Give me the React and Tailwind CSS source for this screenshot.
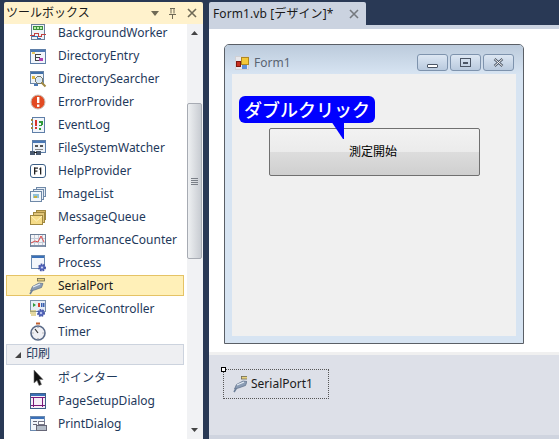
import React from 'react';

const Ic = ({ children }) => (
  <svg width="20" height="20" viewBox="0 0 20 20" className="block" shapeRendering="crispEdges">{children}</svg>
);

const SerialIcon = () => (
  <svg width="20" height="20" viewBox="0 0 20 20" className="block">
    <rect x="9.5" y="2.5" width="7" height="2.5" fill="#e9d27c" stroke="#6f6a50" strokeWidth="0.8" />
    <path d="M2.5 15 L4.5 10.5 L11 7 L15 7.5 L13.5 11.5 L6.5 14 Z" fill="#8b9db5" stroke="#5d6f88" strokeWidth="0.7" />
    <path d="M5 11 L12 8" stroke="#e6edf5" strokeWidth="1.2" />
    <path d="M2 18 L4.5 14" stroke="#6d7f98" strokeWidth="1.6" />
  </svg>
);

const icons = {
  worker: (
    <Ic>
      <rect x="3.5" y="1.5" width="13" height="15" fill="#eef3f8" stroke="#6b7f99" />
      <rect x="5" y="3" width="10" height="4" fill="#3f8f3f" />
      <rect x="6" y="4" width="2" height="2" fill="#b8f0a8" /><rect x="9" y="4" width="2" height="2" fill="#b8f0a8" /><rect x="12" y="4" width="2" height="2" fill="#b8f0a8" />
      <path d="M2 12h4v-2h4v3h3v-2h5" stroke="#c04040" fill="none" />
      <path d="M4 13h5v2h4" stroke="#3a70b0" fill="none" />
    </Ic>
  ),
  entry: (
    <Ic>
      <rect x="2.5" y="3.5" width="15" height="14" fill="#f1f5fb" stroke="#5f7fa8" />
      <rect x="3" y="4" width="14" height="2" fill="#4a78b5" />
      <rect x="7" y="8" width="6" height="1" fill="#444" /><rect x="7" y="8" width="1" height="7" fill="#444" /><rect x="7" y="11" width="5" height="1" fill="#444" /><rect x="7" y="14" width="6" height="1" fill="#444" />
      <rect x="11" y="12" width="4" height="3" fill="#b040b0" />
      <rect x="4" y="6" width="3" height="2" fill="#e8c860" />
    </Ic>
  ),
  searcher: (
    <Ic>
      <rect x="2.5" y="2.5" width="13" height="12" fill="#eef3f8" stroke="#6a86a8" />
      <rect x="3" y="3" width="12" height="2" fill="#3f6fa8" />
      <rect x="4" y="7" width="3" height="3" fill="#e0b840" />
      <circle cx="11" cy="11" r="3.5" fill="#d8e8f4" stroke="#7a7a6a" />
      <path d="M13.5 13.5 L17.5 17.5" stroke="#a08840" strokeWidth="2" shapeRendering="auto" />
      <rect x="6" y="15" width="4" height="2" fill="#4a78b5" />
    </Ic>
  ),
  error: (
    <svg width="20" height="20" viewBox="0 0 20 20" className="block">
      <circle cx="10" cy="10" r="7" fill="#e24a22" stroke="#c8c0b8" />
      <rect x="9" y="5" width="2.4" height="6" fill="#fff" />
      <rect x="9" y="12.5" width="2.4" height="2.4" fill="#fff" />
    </svg>
  ),
  event: (
    <Ic>
      <rect x="4.5" y="2.5" width="12" height="15" fill="#f1f5fb" stroke="#5f7fa8" />
      <rect x="3" y="4" width="2" height="2" fill="#a08840" /><rect x="3" y="8" width="2" height="2" fill="#a08840" /><rect x="3" y="12" width="2" height="2" fill="#a08840" />
      <rect x="7" y="5" width="2" height="6" fill="#d8342a" /><rect x="7" y="12" width="2" height="2" fill="#d8342a" />
      <rect x="11" y="6" width="4" height="2" fill="#2f9a3a" /><rect x="13" y="8" width="2" height="2" fill="#2f9a3a" /><rect x="11" y="10" width="3" height="1" fill="#2f9a3a" /><rect x="11" y="13" width="2" height="2" fill="#2f9a3a" />
    </Ic>
  ),
  fsw: (
    <Ic>
      <rect x="4.5" y="2.5" width="13" height="12" fill="#eef3f8" stroke="#5f7fa8" />
      <rect x="5" y="3" width="12" height="2" fill="#4a78b5" />
      <rect x="7" y="7" width="3" height="2" fill="#555" /><rect x="12" y="7" width="3" height="2" fill="#555" />
      <rect x="7" y="11" width="8" height="1" fill="#888" />
      <rect x="2" y="13" width="5" height="4" fill="#4a5a70" /><rect x="8" y="13" width="5" height="4" fill="#4a5a70" /><rect x="6" y="14" width="3" height="1" fill="#222" />
    </Ic>
  ),
  f1: (
    <svg width="20" height="20" viewBox="0 0 20 20" className="block">
      <rect x="2.5" y="3.5" width="15" height="13" rx="2.5" fill="#fff" stroke="#3c5f86" strokeWidth="1" />
      <rect x="6" y="6.5" width="1.3" height="7" fill="#222" /><rect x="6" y="6.5" width="4" height="1.2" fill="#222" /><rect x="6" y="9.5" width="3.4" height="1.2" fill="#222" />
      <rect x="12" y="6.5" width="1.3" height="7" fill="#222" /><rect x="11" y="7.5" width="1.2" height="1" fill="#222" />
    </svg>
  ),
  images: (
    <Ic>
      <rect x="8.5" y="3.5" width="9" height="9" fill="#e4ecf5" stroke="#6f89a8" />
      <rect x="5.5" y="5.5" width="10" height="10" fill="#e9f0f7" stroke="#6f89a8" />
      <rect x="2.5" y="7.5" width="11" height="10" fill="#f3f7fb" stroke="#6f89a8" />
      <rect x="5" y="10" width="6" height="4" fill="#8fc0d8" /><rect x="6" y="12" width="3" height="2" fill="#c8b040" />
    </Ic>
  ),
  queue: (
    <Ic>
      <rect x="8.5" y="3.5" width="9" height="9" fill="#d8b868" stroke="#a08840" />
      <rect x="5.5" y="5.5" width="11" height="10" fill="#e0c478" stroke="#a08840" />
      <rect x="2.5" y="8.5" width="12" height="9" fill="#f6dc88" stroke="#a08840" />
      <path d="M3 9 L8.5 14 L14 9" stroke="#fff3c0" fill="none" shapeRendering="auto" />
    </Ic>
  ),
  perf: (
    <Ic>
      <rect x="2.5" y="4.5" width="15" height="12" fill="#f4f4f8" stroke="#6d7f98" />
      <path d="M3 8.5h14M3 12.5h14M6.5 5v11M10.5 5v11M14.5 5v11" stroke="#c4ccd8" fill="none" />
      <path d="M3 13 L7 11 L10 12 L13 6 L16 12" stroke="#d84848" fill="none" shapeRendering="auto" />
      <rect x="3" y="15" width="14" height="2" fill="#8090a8" />
    </Ic>
  ),
  process: (
    <svg width="20" height="20" viewBox="0 0 20 20" className="block">
      <rect x="3.5" y="2.5" width="13" height="13" fill="#f3f6fb" stroke="#6b8ab0" />
      <rect x="4" y="3" width="12" height="2" fill="#3a70b8" />
      <circle cx="14" cy="14.5" r="3" fill="#5a6cc0" stroke="#4657a8" strokeWidth="2" strokeDasharray="1.5 1" />
      <circle cx="14" cy="14.5" r="1" fill="#d8e0f8" />
    </svg>
  ),
  serial: <SerialIcon />,
  service: (
    <svg width="20" height="20" viewBox="0 0 20 20" className="block">
      <rect x="2.5" y="1.5" width="15" height="11" fill="#e6edf5" stroke="#7a90aa" />
      <path d="M5 4 L8 6 L5 8 Z" fill="#2f9a3a" />
      <rect x="10" y="4" width="2" height="4" fill="#d84030" /><rect x="13" y="4" width="1.5" height="4" fill="#3a60b0" /><rect x="15" y="4" width="1.5" height="4" fill="#3a60b0" />
      <path d="M2 12h6M2 14h6M3 16h5" stroke="#c8b040" />
      <circle cx="13" cy="14" r="3" fill="#5a6cc0" stroke="#4657a8" strokeWidth="2" strokeDasharray="1.5 1" />
      <circle cx="13" cy="14" r="1" fill="#d8e0f8" />
    </svg>
  ),
  timer: (
    <svg width="20" height="20" viewBox="0 0 20 20" className="block">
      <rect x="8" y="0.5" width="4" height="2" fill="#c06030" />
      <circle cx="10" cy="11" r="7" fill="#f0f0f4" stroke="#5a6a88" strokeWidth="1.6" />
      <path d="M10 11 L7 7" stroke="#333" strokeWidth="1.2" />
      <path d="M10 5v1M15.5 11h-1M10 17v-1M4.5 11h1" stroke="#888" />
    </svg>
  ),
  pointer: (
    <svg width="20" height="20" viewBox="0 0 20 20" className="block">
      <path d="M6 2 L6 15 L9 12.5 L11 17.5 L13.5 16.5 L11.5 11.5 L15 11.5 Z" fill="#111" stroke="#777" strokeWidth="0.6" />
    </svg>
  ),
  page: (
    <Ic>
      <rect x="2.5" y="2.5" width="15" height="15" fill="#f8eef8" stroke="#3c5f86" />
      <rect x="3" y="3" width="14" height="2" fill="#3a70b8" />
      <rect x="3" y="6" width="14" height="1" fill="#7a1a7a" /><rect x="3" y="14" width="14" height="1" fill="#7a1a7a" />
      <rect x="5" y="6" width="1" height="10" fill="#7a1a7a" /><rect x="14" y="6" width="1" height="10" fill="#7a1a7a" />
    </Ic>
  ),
  print: (
    <Ic>
      <rect x="2.5" y="2.5" width="14" height="14" fill="#f1f5fb" stroke="#6b8ab0" />
      <rect x="3" y="3" width="13" height="2" fill="#3a70b8" />
      <rect x="5" y="7" width="4" height="1" fill="#667" /><rect x="5" y="10" width="4" height="1" fill="#667" />
      <rect x="10" y="7" width="6" height="3" fill="#fff" stroke="#778" />
      <rect x="8" y="11" width="10" height="5" fill="#b4bcc8" stroke="#667" />
    </Ic>
  ),
};

const rowsTop = [
  ['BackgroundWorker', 'worker'],
  ['DirectoryEntry', 'entry'],
  ['DirectorySearcher', 'searcher'],
  ['ErrorProvider', 'error'],
  ['EventLog', 'event'],
  ['FileSystemWatcher', 'fsw'],
  ['HelpProvider', 'f1'],
  ['ImageList', 'images'],
  ['MessageQueue', 'queue'],
  ['PerformanceCounter', 'perf'],
  ['Process', 'process'],
];

const Row = ({ label, icon }) => (
  <div className="flex items-center h-[23px] shrink-0 pl-[24px] text-[#1e395b]">
    <span className="w-[20px] shrink-0">{icons[icon]}</span>
    <span className="ml-[10px] whitespace-nowrap">{label}</span>
  </div>
);

const CaptionBtn = ({ children }) => (
  <div className="w-[31px] h-[17px] flex items-center justify-center rounded-[3px] border border-[#7e93ad] bg-gradient-to-b from-[#dde7f3] to-[#b9cade]">
    {children}
  </div>
);

export default function App() {
  return (
    <div
      className="w-[559px] h-[439px] overflow-hidden bg-[#293955] flex text-[12px] leading-none"
      style={{ fontFamily: '"Noto Sans", "Noto Sans CJK JP", sans-serif' }}
    >
      {/* toolbox */}
      <div className="w-[199px] ml-[4px] mt-[2px] flex flex-col shrink-0">
        <div className="relative z-10 h-[22px] shrink-0 bg-[#fff2cc] rounded-t-[2px] flex items-center pl-[2px] pr-[6px] text-[12px] text-[#1a1a1a]">
          <span className="flex-1 whitespace-nowrap">ツールボックス</span>
          <svg width="8" height="5" viewBox="0 0 8 5" className="mr-[10px]"><path d="M0 0h8L4 5z" fill="#6f6a56" /></svg>
          <svg width="7" height="11" viewBox="0 0 7 11" className="mr-[11px]"><path d="M1 .5h5M2 .5v5M5 .5v5M0 6.5h7M3.5 7v4" stroke="#6f6a56" fill="none" /></svg>
          <svg width="10" height="10" viewBox="0 0 10 10"><path d="M1 1l8 8M9 1l-8 8" stroke="#6f6a56" strokeWidth="1.6" /></svg>
        </div>
        <div className="flex-1 flex min-h-0">
          <div className="flex-1 bg-white flex flex-col min-w-0 overflow-visible -mt-[3px]">
            {rowsTop.map(([l, i]) => <Row key={l} label={l} icon={i} />)}
            <div className="ml-[2px] mr-[3px] my-px h-[21px] shrink-0 flex items-center pl-[21px] bg-[#fff0b8] border border-[#e5c365] text-[#1a1a1a]">
              <span className="w-[20px] shrink-0">{icons.serial}</span>
              <span className="ml-[10px]">SerialPort</span>
            </div>
            <Row label="ServiceController" icon="service" />
            <Row label="Timer" icon="timer" />
            <div className="ml-[2px] mr-[3px] my-px h-[21px] shrink-0 flex items-center pl-[8px] bg-[#eeeff2] border border-[#ccd3de] text-[#1e395b]">
              <svg width="6" height="6" viewBox="0 0 6 6" className="mr-[5px]"><path d="M6 0v6H0z" fill="#444" /></svg>
              <span className="mt-[-1px]">印刷</span>
            </div>
            <Row label="ポインター" icon="pointer" />
            <Row label="PageSetupDialog" icon="page" />
            <Row label="PrintDialog" icon="print" />
            <Row label="" icon="print" />
          </div>
          <div className="w-[16px] bg-[#f1f2f4] flex flex-col items-start shrink-0">
            <svg width="7" height="4" viewBox="0 0 7 4" className="mt-[7px] ml-[4px]"><path d="M3.5 0L7 4H0z" fill="#444" /></svg>
            <div className="w-[15px] h-[156px] mt-[68px] rounded-[2px] border border-[#a7abb3] bg-gradient-to-r from-[#eef0f2] to-[#c8ccd2] flex flex-col items-center justify-center gap-[1px]">
              <span className="w-[7px] h-px bg-[#7a7f87]" />
              <span className="w-[7px] h-px bg-[#7a7f87]" />
              <span className="w-[7px] h-px bg-[#7a7f87]" />
              <span className="w-[7px] h-px bg-[#7a7f87]" />
            </div>
            <svg width="7" height="4" viewBox="0 0 7 4" className="mt-auto mb-[7px] ml-[4px]"><path d="M0 0h7L3.5 4z" fill="#444" /></svg>
          </div>
        </div>
      </div>

      {/* designer */}
      <div className="ml-[6px] mt-[2px] flex-1 flex flex-col min-w-0">
        <div className="h-[23px] shrink-0 flex">
          <div className="w-[157px] bg-[#cbd3e0] rounded-t-[2px] flex items-center pl-[4px] text-[#1a1a1a] text-[12px]">
            <span className="whitespace-nowrap flex-1 tracking-[0.1px]">Form1.vb [デザイン]*</span>
            <svg width="10" height="10" viewBox="0 0 10 10" className="mr-[7px]"><path d="M1 1l8 8M9 1l-8 8" stroke="#75797f" strokeWidth="1.6" /></svg>
          </div>
        </div>
        <div className="h-[4px] shrink-0 bg-[#cbd3e0]" />
        <div className="h-[323px] shrink-0 bg-white pl-[15px] pt-[15px]">
          <div className="w-[300px] h-[300px] rounded-t-[5px] border border-[#5a5f66] bg-[#d7e4f2] flex flex-col">
            <div className="h-[29px] shrink-0 rounded-t-[4px] bg-gradient-to-b from-[#bccbdc] to-[#d7e4f2] flex items-center pl-[10px] pr-[9px] pt-[6px]">
              <svg width="14" height="14" viewBox="0 0 14 14" shapeRendering="crispEdges" className="mr-[5px]">
                <rect x="0.5" y="0.5" width="13" height="13" fill="#e8e8ec" stroke="#d0d0d4" />
                <rect x="6" y="1" width="7" height="7" fill="#f4c838" stroke="#b08820" />
                <rect x="1" y="5" width="4" height="5" fill="#c83020" stroke="#801810" />
                <rect x="7" y="9" width="5" height="4" fill="#6090d8" />
              </svg>
              <span className="flex-1 text-[#5a6472] text-[12px]">Form1</span>
              <div className="flex gap-[2px]">
                <CaptionBtn><span className="w-[11px] h-[4px] mt-[6px] border border-[#4a5565] bg-white rounded-[1px]" /></CaptionBtn>
                <CaptionBtn><span className="w-[11px] h-[9px] border border-[#4a5565] flex items-center justify-center"><span className="w-[5px] h-[2px] bg-[#4a5565]" /></span></CaptionBtn>
                <CaptionBtn>
                  <svg width="11" height="9" viewBox="0 0 11 9"><path d="M1.5 1l8 7M9.5 1l-8 7" stroke="#4a5565" strokeWidth="2.4" /><path d="M1.5 1l8 7M9.5 1l-8 7" stroke="#fff" strokeWidth="1" /></svg>
                </CaptionBtn>
              </div>
            </div>
            <div className="relative mx-[7px] h-[262px] bg-[#f0f0f0] pt-[54px] pl-[37px]">
              <button className="w-[211px] h-[48px] rounded-[2px] border border-[#707070] bg-[linear-gradient(#f2f2f2_0%,#ebebeb_50%,#dddddd_50%,#cfcfcf_100%)] flex items-center justify-center text-black text-[12px] pr-[3px]">
                測定開始
              </button>
              <div className="absolute left-[7px] top-[22px] w-[136px] h-[27px] rounded-[6px] bg-[#0000ff] text-white text-[18px] font-medium flex items-center justify-center whitespace-nowrap">
                ダブルクリック
              </div>
              <svg width="14" height="19" viewBox="0 0 14 19" className="absolute left-[99px] top-[47px]"><path d="M0 0h13v18h-1z" fill="#0000ff" /></svg>
            </div>
          </div>
        </div>
        <div className="h-[3px] shrink-0 bg-[#f0f0f0]" />
        <div className="flex-1 bg-[#dde0e8] pl-[14px] pt-[14px] border-b-[4px] border-[#cfd4df]">
          <div className="relative w-[106px] h-[30px] border border-dotted border-[#555] flex items-center pl-[8px] text-[#1a1a1a]">
            <span className="absolute left-[-3px] top-[-3px] w-[5px] h-[5px] border border-black bg-white" />
            <span className="w-[15px] h-[20px] overflow-hidden mr-[4px] shrink-0"><SerialIcon /></span>
            <span>SerialPort1</span>
          </div>
        </div>
      </div>
    </div>
  );
}
